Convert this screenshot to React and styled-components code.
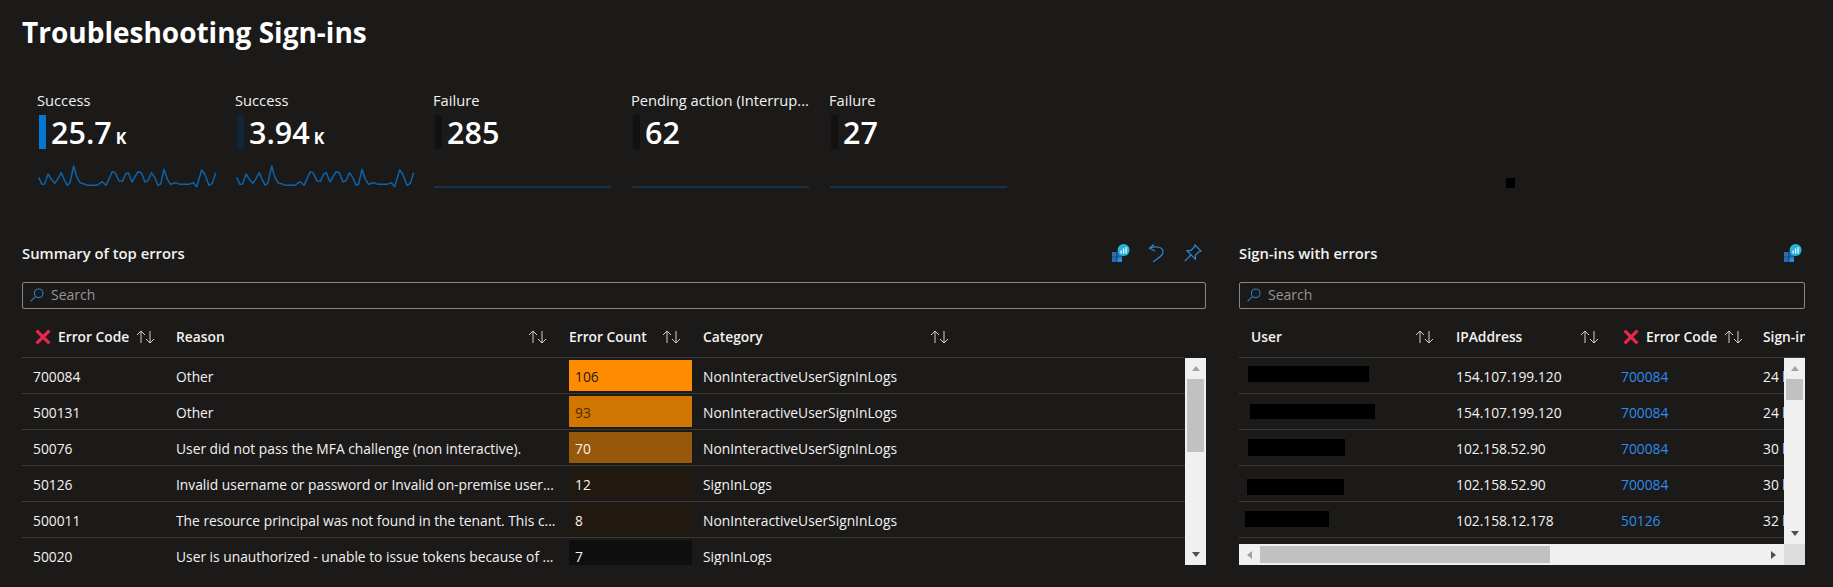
import React from "react";
import styled, { createGlobalStyle } from "styled-components";

const GlobalStyle = createGlobalStyle`
  html, body {
    margin: 0;
    padding: 0;
    background: #1b1a19;
  }
  body {
    font-family: "Open Sans", "Noto Sans", sans-serif;
    color: #f3f2f1;
  }
`;

const Page = styled.div`
  width: 1833px;
  height: 587px;
  overflow: hidden;
  box-sizing: border-box;
  padding: 0 28px 0 22px;
  background: #1b1a19;
`;

const Title = styled.h1`
  margin: 0;
  font-size: 28px;
  line-height: 64px;
  font-weight: 700;
  color: #ffffff;
`;

const Tiles = styled.div`
  display: flex;
  margin-top: 26px;
  padding-left: 15px;
`;

const Tile = styled.div`
  width: 198px;
  height: 102px;
  flex: none;
`;

const TileLabel = styled.div`
  font-size: 14.7px;
  line-height: 20px;
  margin-bottom: 5px;
  white-space: nowrap;
`;

const TileValue = styled.div`
  display: flex;
  align-items: center;
  height: 34px;
  padding-left: 2px;
  gap: 5px;
  font-size: 30.5px;
  font-weight: 600;
  color: #ffffff;
`;

const TileBar = styled.span`
  width: 7px;
  height: 34px;
  background: ${(p) => p.$color};
`;

const TileUnit = styled.span`
  font-size: 16px;
  font-weight: 700;
  margin-left: 4px;
  align-self: flex-end;
  line-height: 26px;
`;

const Spark = styled.svg`
  display: block;
  margin-top: 11px;
`;

const BlackMark = styled.div`
  width: 9px;
  height: 10px;
  margin: 88px 0 0 479px;
  background: #000;
  flex: none;
`;

const Panels = styled.div`
  display: grid;
  grid-template-columns: 1184px 566px;
  column-gap: 33px;
  margin-top: 46px;
`;

const Panel = styled.section`
  min-width: 0;
`;

const PanelHead = styled.div`
  display: flex;
  align-items: center;
  height: 30px;
  margin-bottom: 14px;
  padding-right: ${(p) => p.$pad}px;
`;

const PanelTitle = styled.h2`
  margin: 0;
  flex: 1;
  font-size: 14.8px;
  font-weight: 600;
  color: #f3f2f1;
`;

const Tools = styled.div`
  display: flex;
  gap: 18px;
`;

const Tool = styled.svg`
  display: block;
  width: 18px;
  height: 18px;
`;

const SearchBox = styled.div`
  display: flex;
  align-items: center;
  gap: 7px;
  box-sizing: border-box;
  height: 27px;
  padding: 0 0 2px 7px;
  border: 1px solid #8a8886;
  border-radius: 2px;
  font-size: 14px;
  color: #979593;
`;

const HeaderRow = styled.div`
  display: grid;
  grid-template-columns: ${(p) => p.$cols};
  box-sizing: border-box;
  height: 49px;
  overflow: hidden;
  border-bottom: 1px solid #3b3a39;
  margin-right: ${(p) => p.$trim}px;
  font-size: 13.8px;
  font-weight: 600;
  white-space: nowrap;
`;

const HeaderCell = styled.div`
  display: flex;
  align-items: center;
  gap: 7px;
  padding: 7px 22px 0 ${(p) => p.$pad || 0}px;
  min-width: 0;
`;

const HeaderLabel = styled.span`
  flex: ${(p) => (p.$grow ? 1 : "none")};
`;

const SortIcon = styled.svg`
  flex: none;
  width: 19px;
  height: 14px;
`;

const ClearIcon = styled.svg`
  flex: none;
  width: 16px;
  height: 16px;
`;

const TableBody = styled.div`
  display: flex;
  height: ${(p) => p.$height}px;
`;

const Rows = styled.div`
  flex: 1;
  min-width: 0;
  overflow: hidden;
`;

const Row = styled.div`
  display: grid;
  grid-template-columns: ${(p) => p.$cols};
  box-sizing: border-box;
  height: 36px;
  border-bottom: 1px solid #3b3a39;
  font-size: 13.8px;
  line-height: 38px;
  white-space: nowrap;
`;

const Cell = styled.div`
  padding-left: ${(p) => p.$pad || 0}px;
  overflow: hidden;
  color: ${(p) => p.$color || "#f3f2f1"};
`;

const CountBar = styled.div`
  width: 123px;
  height: 31px;
  margin-top: 2px;
  padding-left: 6px;
  line-height: 33px;
  box-sizing: border-box;
  background: ${(p) => p.$bg};
  color: ${(p) => p.$color || "#f3f2f1"};
`;

const Redacted = styled.div`
  width: ${(p) => p.$width}px;
  height: ${(p) => p.$height}px;
  margin: ${(p) => p.$top}px 0 0 ${(p) => p.$left}px;
  background: #000;
`;

const VScroll = styled.div`
  display: flex;
  flex-direction: column;
  flex: none;
  width: 21px;
  background: #f0f0f0;
  align-items: center;
`;

const VThumb = styled.div`
  width: 17px;
  height: ${(p) => p.$height}px;
  background: #c1c1c1;
`;

const Spacer = styled.div`
  flex: 1;
`;

const ArrowButton = styled.div`
  flex: none;
  width: 21px;
  height: 21px;
  display: flex;
  align-items: center;
  justify-content: center;
`;

const ArrowUp = styled.span`
  border-left: 4px solid transparent;
  border-right: 4px solid transparent;
  border-bottom: 5px solid #a3a3a3;
`;

const ArrowDown = styled.span`
  border-left: 4px solid transparent;
  border-right: 4px solid transparent;
  border-top: 5px solid #505050;
`;

const ArrowLeft = styled.span`
  border-top: 4px solid transparent;
  border-bottom: 4px solid transparent;
  border-right: 5px solid #a3a3a3;
`;

const ArrowRight = styled.span`
  border-top: 4px solid transparent;
  border-bottom: 4px solid transparent;
  border-left: 5px solid #505050;
`;

const HScrollRow = styled.div`
  display: flex;
  height: 21px;
`;

const HScroll = styled.div`
  flex: 1;
  display: flex;
  align-items: center;
  background: #f0f0f0;
`;

const HThumb = styled.div`
  width: 290px;
  height: 17px;
  background: #c1c1c1;
`;

const ScrollCorner = styled.div`
  width: 21px;
  background: #dcdcdc;
`;

const sparkPoints =
  "14,52 24,73 32,72 42,42 52,58 62,70 72,56 82,38 92,62 100,76 108,68 119,18 128,50 138,68 148,71 160,76 188,76 205,65 216,76 235,35 243,38 255,63 265,64 275,42 283,38 294,66 312,35 322,38 333,66 342,62 352,38 362,52 372,76 380,72 390,28 400,58 410,73 425,68 438,73 465,73 478,68 488,80 503,30 512,42 525,76 535,70 545,38";

const tiles = [
  { label: "Success", value: "25.7", unit: "K", bar: "#0078d4", spark: true },
  { label: "Success", value: "3.94", unit: "K", bar: "#10243a", spark: true },
  { label: "Failure", value: "285", bar: "#111111" },
  { label: "Pending action (Interrup...", value: "62", bar: "#111111" },
  { label: "Failure", value: "27", bar: "#111111" },
];

const errors = [
  { code: "700084", reason: "Other", count: 106, bg: "#ff8c00", color: "#1b1a19", category: "NonInteractiveUserSignInLogs" },
  { code: "500131", reason: "Other", count: 93, bg: "#d17600", color: "#4a2c00", category: "NonInteractiveUserSignInLogs" },
  { code: "50076", reason: "User did not pass the MFA challenge (non interactive).", count: 70, bg: "#96580a", category: "NonInteractiveUserSignInLogs" },
  { code: "50126", reason: "Invalid username or password or Invalid on-premise user...", count: 12, bg: "#21190f", category: "SignInLogs" },
  { code: "500011", reason: "The resource principal was not found in the tenant. This c...", count: 8, bg: "#21190f", category: "NonInteractiveUserSignInLogs" },
  { code: "50020", reason: "User is unauthorized - unable to issue tokens because of ...", count: 7, bg: "#0f0f0f", category: "SignInLogs" },
];

const signIns = [
  { left: 9, top: 8, width: 121, height: 16, ip: "154.107.199.120", code: "700084", time: "24 h" },
  { left: 11, top: 10, width: 125, height: 15, ip: "154.107.199.120", code: "700084", time: "24 h" },
  { left: 9, top: 9, width: 97, height: 17, ip: "102.158.52.90", code: "700084", time: "30 h" },
  { left: 8, top: 13, width: 97, height: 16, ip: "102.158.52.90", code: "700084", time: "30 h" },
  { left: 6, top: 9, width: 84, height: 16, ip: "102.158.12.178", code: "50126", time: "32 h" },
];

const errorCols = "154px 393px 134px 268px 1fr";
const signInCols = "217px 165px 142px 1fr";

const Sort = () => (
  <SortIcon viewBox="0 0 19 14" fill="none" stroke="#d2d0ce" strokeWidth="1">
    <path d="M5 13V1M1 5l4-4 4 4" />
    <path d="M14 1v12M10 9l4 4 4-4" />
  </SortIcon>
);

const Clear = () => (
  <ClearIcon viewBox="0 0 15 15" fill="none" stroke="#e8274f" strokeWidth="3">
    <path d="M1.5 1.5l12 12M13.5 1.5l-12 12" />
  </ClearIcon>
);

const InsightsIcon = () => (
  <Tool viewBox="0 0 18 18">
    <rect x="0" y="8" width="4.6" height="4.8" fill="#2f6db5" />
    <rect x="0" y="13.2" width="4.6" height="4.8" fill="#1c6fc4" />
    <rect x="5.2" y="13.2" width="4.8" height="4.8" fill="#2a8ae0" />
    <rect x="5.2" y="8" width="4.8" height="4.8" fill="#2a6cb0" />
    <circle cx="11.6" cy="6" r="6" fill="#29b4dc" />
    <path d="M8.5 6.5h1.2v3H8.5zM11 4.5h1.2v5H11zM13.5 3h1.2v6.5h-1.2z" fill="#fff" />
  </Tool>
);

const UndoIcon = () => (
  <Tool viewBox="0 0 18 18" fill="none" stroke="#2b88d8" strokeWidth="1.2">
    <path d="M6 .5L1.5 4.2 7 7" />
    <path d="M1.5 4.2C6 2 15 2 15 8c0 3-3 5-10 10" />
  </Tool>
);

const PinIcon = () => (
  <Tool viewBox="0 0 18 18" fill="none" stroke="#2b88d8" strokeWidth="1.2">
    <path d="M11 1l6 6-1.6.5-4 3.6v4L3 6.8l4-.4 3.5-3.7z" />
    <path d="M7 11l-6.2 6.2" />
  </Tool>
);

const SearchIcon = () => (
  <svg width="14" height="14" viewBox="0 0 14 14" fill="none" stroke="#2b7cc4" strokeWidth="1.1">
    <circle cx="8.7" cy="5.3" r="4.3" />
    <path d="M5.6 8.4L.6 13.4" />
  </svg>
);

const Search = () => (
  <SearchBox>
    <SearchIcon />
    Search
  </SearchBox>
);

const VerticalBar = ({ thumb }) => (
  <VScroll>
    <ArrowButton>
      <ArrowUp />
    </ArrowButton>
    <VThumb $height={thumb} />
    <Spacer />
    <ArrowButton>
      <ArrowDown />
    </ArrowButton>
  </VScroll>
);

const App = () => {
  return (
    <Page>
      <GlobalStyle />
      <Title>Troubleshooting Sign-ins</Title>

      <Tiles>
        {tiles.map((t, i) => (
          <Tile key={i}>
            <TileLabel>{t.label}</TileLabel>
            <TileValue>
              <TileBar $color={t.bar} />
              <span>
                {t.value}
                {t.unit && <TileUnit>{t.unit}</TileUnit>}
              </span>
            </TileValue>
            <Spark width="186" height="32" viewBox="9 0 558 96" fill="none">
              {t.spark ? (
                <polyline points={sparkPoints} stroke="#0a64ad" strokeWidth="4.5" strokeLinejoin="round" />
              ) : (
                <path d="M12 81H543" stroke="#174b7a" strokeWidth="3.5" />
              )}
            </Spark>
          </Tile>
        ))}
        <BlackMark />
      </Tiles>

      <Panels>
        <Panel>
          <PanelHead $pad={4}>
            <PanelTitle>Summary of top errors</PanelTitle>
            <Tools>
              <InsightsIcon />
              <UndoIcon />
              <PinIcon />
            </Tools>
          </PanelHead>
          <Search />
          <HeaderRow $cols={errorCols} $trim={22}>
            <HeaderCell $pad={13}>
              <Clear />
              <HeaderLabel>Error Code</HeaderLabel>
              <Sort />
            </HeaderCell>
            <HeaderCell>
              <HeaderLabel $grow>Reason</HeaderLabel>
              <Sort />
            </HeaderCell>
            <HeaderCell>
              <HeaderLabel $grow>Error Count</HeaderLabel>
              <Sort />
            </HeaderCell>
            <HeaderCell>
              <HeaderLabel $grow>Category</HeaderLabel>
              <Sort />
            </HeaderCell>
          </HeaderRow>
          <TableBody $height={207}>
            <Rows>
              {errors.map((e) => (
                <Row key={e.code} $cols={errorCols}>
                  <Cell $pad={11}>{e.code}</Cell>
                  <Cell>{e.reason}</Cell>
                  <Cell>
                    <CountBar $bg={e.bg} $color={e.color}>
                      {e.count}
                    </CountBar>
                  </Cell>
                  <Cell>{e.category}</Cell>
                </Row>
              ))}
            </Rows>
            <VerticalBar thumb={73} />
          </TableBody>
        </Panel>

        <Panel>
          <PanelHead $pad={3}>
            <PanelTitle>Sign-ins with errors</PanelTitle>
            <InsightsIcon />
          </PanelHead>
          <Search />
          <HeaderRow $cols={signInCols} $trim={0}>
            <HeaderCell $pad={12}>
              <HeaderLabel $grow>User</HeaderLabel>
              <Sort />
            </HeaderCell>
            <HeaderCell>
              <HeaderLabel $grow>IPAddress</HeaderLabel>
              <Sort />
            </HeaderCell>
            <HeaderCell $pad={2}>
              <Clear />
              <HeaderLabel $grow>Error Code</HeaderLabel>
              <Sort />
            </HeaderCell>
            <HeaderCell>
              <HeaderLabel>Sign-in time</HeaderLabel>
            </HeaderCell>
          </HeaderRow>
          <TableBody $height={186}>
            <Rows>
              {signIns.map((s, i) => (
                <Row key={i} $cols={signInCols}>
                  <Cell>
                    <Redacted $left={s.left} $top={s.top} $width={s.width} $height={s.height} />
                  </Cell>
                  <Cell>{s.ip}</Cell>
                  <Cell $color="#2f8ceb">{s.code}</Cell>
                  <Cell>{s.time}</Cell>
                </Row>
              ))}
            </Rows>
            <VerticalBar thumb={21} />
          </TableBody>
          <HScrollRow>
            <HScroll>
              <ArrowButton>
                <ArrowLeft />
              </ArrowButton>
              <HThumb />
              <Spacer />
              <ArrowButton>
                <ArrowRight />
              </ArrowButton>
            </HScroll>
            <ScrollCorner />
          </HScrollRow>
        </Panel>
      </Panels>
    </Page>
  );
};

export default App;
